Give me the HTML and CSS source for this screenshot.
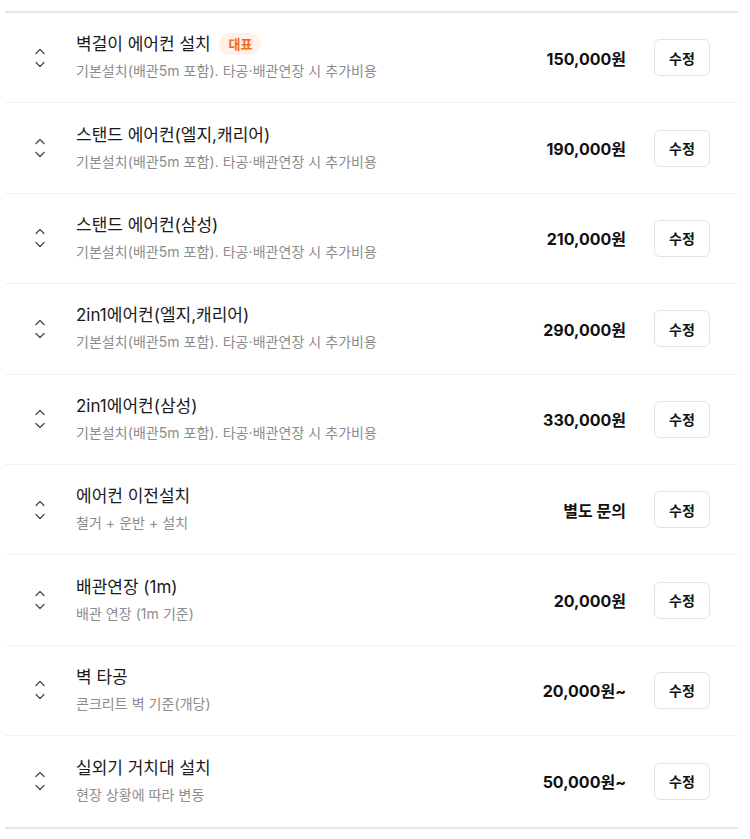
FILE: index.html
```html
<!DOCTYPE html>
<html lang="ko">
<head>
<meta charset="utf-8">
<link rel="stylesheet" href="styles.css">
</head>
<body>
<div class="list">
  <div class="row">
    <div class="sort"><svg viewBox="0 0 10 20" width="10" height="20"><path d="M1 5.5 L5 1.5 L9 5.5" /><path d="M1 14.5 L5 18.5 L9 14.5" /></svg></div>
    <div class="info">
      <div class="title">벽걸이 에어컨 설치 <span class="badge">대표</span></div>
      <div class="desc">기본설치(배관5m 포함). 타공·배관연장 시 추가비용</div>
    </div>
    <div class="price">150,000원</div>
    <button class="edit">수정</button>
  </div>
  <div class="row">
    <div class="sort"><svg viewBox="0 0 10 20" width="10" height="20"><path d="M1 5.5 L5 1.5 L9 5.5" /><path d="M1 14.5 L5 18.5 L9 14.5" /></svg></div>
    <div class="info">
      <div class="title">스탠드 에어컨(엘지,캐리어)</div>
      <div class="desc">기본설치(배관5m 포함). 타공·배관연장 시 추가비용</div>
    </div>
    <div class="price">190,000원</div>
    <button class="edit">수정</button>
  </div>
  <div class="row">
    <div class="sort"><svg viewBox="0 0 10 20" width="10" height="20"><path d="M1 5.5 L5 1.5 L9 5.5" /><path d="M1 14.5 L5 18.5 L9 14.5" /></svg></div>
    <div class="info">
      <div class="title">스탠드 에어컨(삼성)</div>
      <div class="desc">기본설치(배관5m 포함). 타공·배관연장 시 추가비용</div>
    </div>
    <div class="price">210,000원</div>
    <button class="edit">수정</button>
  </div>
  <div class="row">
    <div class="sort"><svg viewBox="0 0 10 20" width="10" height="20"><path d="M1 5.5 L5 1.5 L9 5.5" /><path d="M1 14.5 L5 18.5 L9 14.5" /></svg></div>
    <div class="info">
      <div class="title">2in1에어컨(엘지,캐리어)</div>
      <div class="desc">기본설치(배관5m 포함). 타공·배관연장 시 추가비용</div>
    </div>
    <div class="price">290,000원</div>
    <button class="edit">수정</button>
  </div>
  <div class="row">
    <div class="sort"><svg viewBox="0 0 10 20" width="10" height="20"><path d="M1 5.5 L5 1.5 L9 5.5" /><path d="M1 14.5 L5 18.5 L9 14.5" /></svg></div>
    <div class="info">
      <div class="title">2in1에어컨(삼성)</div>
      <div class="desc">기본설치(배관5m 포함). 타공·배관연장 시 추가비용</div>
    </div>
    <div class="price">330,000원</div>
    <button class="edit">수정</button>
  </div>
  <div class="row">
    <div class="sort"><svg viewBox="0 0 10 20" width="10" height="20"><path d="M1 5.5 L5 1.5 L9 5.5" /><path d="M1 14.5 L5 18.5 L9 14.5" /></svg></div>
    <div class="info">
      <div class="title">에어컨 이전설치</div>
      <div class="desc">철거 + 운반 + 설치</div>
    </div>
    <div class="price">별도 문의</div>
    <button class="edit">수정</button>
  </div>
  <div class="row">
    <div class="sort"><svg viewBox="0 0 10 20" width="10" height="20"><path d="M1 5.5 L5 1.5 L9 5.5" /><path d="M1 14.5 L5 18.5 L9 14.5" /></svg></div>
    <div class="info">
      <div class="title">배관연장 (1m)</div>
      <div class="desc">배관 연장 (1m 기준)</div>
    </div>
    <div class="price">20,000원</div>
    <button class="edit">수정</button>
  </div>
  <div class="row">
    <div class="sort"><svg viewBox="0 0 10 20" width="10" height="20"><path d="M1 5.5 L5 1.5 L9 5.5" /><path d="M1 14.5 L5 18.5 L9 14.5" /></svg></div>
    <div class="info">
      <div class="title">벽 타공</div>
      <div class="desc">콘크리트 벽 기준(개당)</div>
    </div>
    <div class="price">20,000원~</div>
    <button class="edit">수정</button>
  </div>
  <div class="row">
    <div class="sort"><svg viewBox="0 0 10 20" width="10" height="20"><path d="M1 5.5 L5 1.5 L9 5.5" /><path d="M1 14.5 L5 18.5 L9 14.5" /></svg></div>
    <div class="info">
      <div class="title">실외기 거치대 설치</div>
      <div class="desc">현장 상황에 따라 변동</div>
    </div>
    <div class="price">50,000원~</div>
    <button class="edit">수정</button>
  </div>
</div>
</body>
</html>
```

FILE: styles.css
```css
* { box-sizing: border-box; }
body {
  margin: 0;
  background: #fff;
  font-family: "Inter", "Noto Sans CJK KR", sans-serif;
  color: #111;
}
.list {
  margin: 11px 12px 0 5px;
  border-top: 2px solid #e5e5e7;
  border-bottom: 2px solid #e5e5e7;
}
.row {
  height: 90.4px;
  display: flex;
  align-items: center;
  padding: 0 28px 0 30px;
  border-bottom: 1px solid #f0f0f2;
}
.row:last-child { border-bottom: none; }
.sort {
  width: 10px;
  margin-right: 31px;
  display: flex;
  align-items: center;
}
.sort svg { display: block; }
.sort path {
  fill: none;
  stroke: #4a4a4a;
  stroke-width: 1.3;
  stroke-linecap: round;
  stroke-linejoin: round;
}
.info {
  flex: 1;
  display: flex;
  flex-direction: column;
  gap: 5px;
  margin-top: -2px;
}
.title {
  font-size: 17px;
  line-height: 24px;
  color: #1a1a1a;
  display: flex;
  align-items: center;
  gap: 4px;
  white-space: pre;
}
.badge {
  font-size: 13px;
  font-weight: 700;
  color: #f26b1d;
  background: #fff0e9;
  border-radius: 11px;
  padding: 0 9px;
  line-height: 22px;
}
.desc {
  font-size: 14px;
  line-height: 20px;
  color: #8c8c8c;
  letter-spacing: 0.05px;
}
.price {
  font-size: 16px;
  font-weight: 700;
  color: #111;
  margin-right: 28px;
}
.edit {
  width: 56px;
  height: 37px;
  border: 1px solid #e3e3e6;
  border-radius: 6px;
  background: #fff;
  font-family: "Inter", "Noto Sans CJK KR", sans-serif;
  font-size: 14px;
  font-weight: 600;
  color: #111;
  padding: 0;
}
```
